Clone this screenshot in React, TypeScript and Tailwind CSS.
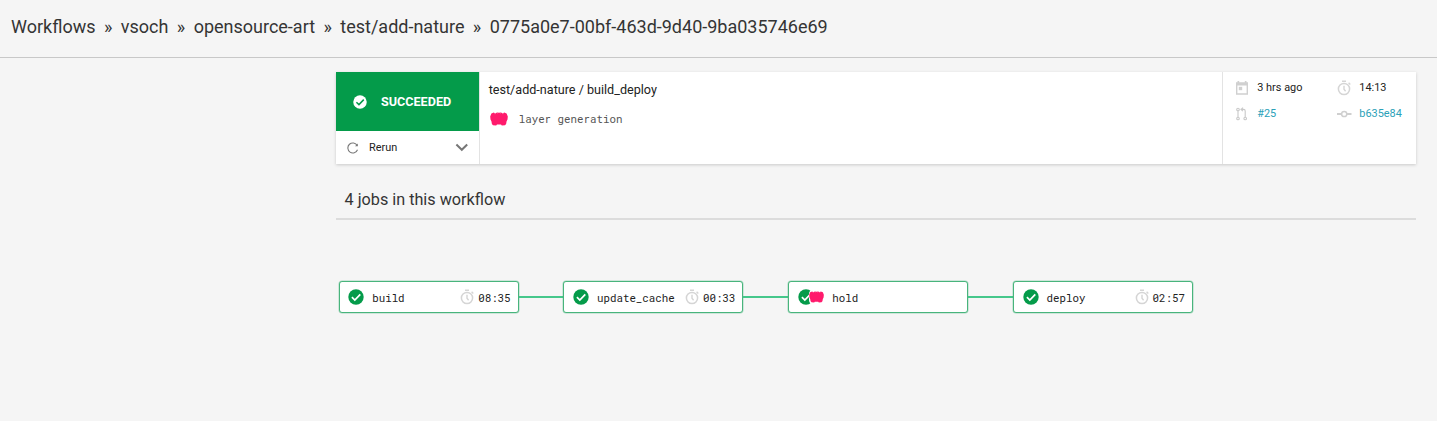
import { Fragment, type ReactNode } from "react";

const crumbs = ["Workflows", "vsoch", "opensource-art", "test/add-nature", "0775a0e7-00bf-463d-9d40-9ba035746e69"];

const jobs = [
  { name: "build", time: "08:35" },
  { name: "update_cache", time: "00:33" },
  { name: "hold", avatar: true },
  { name: "deploy", time: "02:57" },
];

function CheckIcon({ size, disc, tick }: { size: number; disc: string; tick: string }) {
  return (
    <svg width={size} height={size} viewBox="0 0 16 16" className="block shrink-0">
      <circle cx="8" cy="8" r="7.7" fill={disc} />
      <path d="M3.9 8.2 6.8 11 12.3 5.3" fill="none" stroke={tick} strokeWidth="1.7" />
    </svg>
  );
}

function Stopwatch() {
  return (
    <svg width="15" height="16" viewBox="0 0 15 16" fill="none" stroke="#d5d5d5" className="block shrink-0">
      <circle cx="7" cy="9" r="5.6" strokeWidth="1.5" />
      <path d="M5 1.3h4M7 5.8v3.4l1.6 2M11.6 2.8l1.7 1.7" strokeWidth="1.4" />
    </svg>
  );
}

function Avatar({ width, height }: { width: number; height: number }) {
  return (
    <svg width={width} height={height} viewBox="0 0 18 14" preserveAspectRatio="none" className="block shrink-0">
      <path
        d="M1.4 1.4 3.8.6 5.2 1.5 7 .5 9 .8 11 .5 12.8 1.5 14.2.6 16.6 1.4 17.8 4.4 17.5 7.6 16.6 9.2 16.1 12 15 13.2 11.8 13.5 11 12.6H7L6.2 13.5 3 13.2 1.9 12 1.4 9.2.5 7.6.2 4.4Z"
        fill="#ff1a6c"
      />
      <path d="M4.9 1v1.2M13.1 1v1.2M7.6 1.2v.7M10.4 1.2v.7" stroke="#ff86b1" strokeWidth=".5" />
    </svg>
  );
}

function Meta({ icon, link, children }: { icon: ReactNode; link?: boolean; children: ReactNode }) {
  return (
    <div className="flex h-[26px] items-center">
      <span className="flex w-[22.3px] shrink-0 items-center">{icon}</span>
      <span className={link ? "pt-[2px] text-[#2ba1b8]" : "pt-[2px] text-[#222]"}>{children}</span>
    </div>
  );
}

export default function App() {
  return (
    <div className="h-[421px] w-[1437px] overflow-hidden bg-[#f5f5f5] font-['Roboto',sans-serif] text-[#343434]">
      <header className="flex h-[58px] items-center border-b border-[#c8c8c8] pb-[5px] pl-[11px] text-[18px] whitespace-nowrap">
        {crumbs.map((crumb, i) => (
          <Fragment key={crumb}>
            {i > 0 && <span className="w-[25.25px] text-center">»</span>}
            <span>{crumb}</span>
          </Fragment>
        ))}
      </header>

      <main className="ml-[336px] w-[1080px] pt-[14px]">
        <section className="flex h-[92px] bg-white text-[10.9px] shadow-[0_1px_3px_rgba(0,0,0,0.18)]">
          <div className="flex w-[144px] flex-col border-r border-[#e3e3e3]">
            <div className="flex h-[59px] w-[143px] items-center bg-[#049b4a] pl-[17px] text-[12.6px] font-bold text-white">
              <CheckIcon size={14} disc="#fff" tick="#049b4a" />
              <span className="pt-[2px] pl-[14px]">SUCCEEDED</span>
            </div>
            <div className="flex h-[33px] items-center pl-[11px] text-[#222]">
              <svg width="12" height="12" viewBox="0 0 12 12" fill="none" stroke="#777" className="block shrink-0">
                <path d="M10.2 3.5A5 5 0 1 0 10.5 7.8" strokeWidth="1.1" />
                <path d="M10.8 1.4v2.8H8Z" fill="#777" stroke="none" />
              </svg>
              <span className="w-[96px] shrink-0 pt-px pl-[10px]">Rerun</span>
              <svg width="14" height="9" viewBox="0 0 14 9" fill="none" stroke="#777" strokeWidth="2" className="block shrink-0">
                <path d="m1.4 1.5 5.4 5.3 5.4-5.3" />
              </svg>
            </div>
          </div>
          <div className="w-[742px] pt-[9px] pl-[8.7px]">
            <div className="text-[12.6px] leading-[18px] text-[#222]">test/add-nature / build_deploy</div>
            <div className="mt-[12px] flex h-[17px] items-center pl-px">
              <span className="-mt-px">
                <Avatar width={18} height={14} />
              </span>
              <span className="pl-[11px] font-['Roboto_Mono','DejaVu_Sans_Mono',monospace] text-[10.8px] text-[#555]">layer generation</span>
            </div>
          </div>
          <div className="grid w-[194px] grid-cols-[102px_1fr] content-start border-l border-[#e3e3e3] pt-[2px] pl-[12px]">
            <Meta
              icon={
                <svg width="14" height="14" viewBox="0 0 14 14" className="mt-px block">
                  <path d="M2.5 0h1.7v1.2h5.6V0h1.7v1.2H13v12.5H1V1.2h1.5ZM2.4 4.4v7.9h9.2V4.4Z" fill="#d0d0d0" fillRule="evenodd" />
                  <path d="M3.8 5.8h3.4v3.4H3.8Z" fill="#d0d0d0" />
                </svg>
              }
            >
              3 hrs ago
            </Meta>
            <Meta icon={<span className="pt-px"><Stopwatch /></span>}>14:13</Meta>
            <Meta
              link
              icon={
                <svg width="14" height="14" viewBox="0 0 14 14" fill="none" stroke="#c9c9c9" strokeWidth="1.1" className="mt-px block">
                  <circle cx="3" cy="2.5" r="1.3" />
                  <circle cx="3" cy="11.5" r="1.3" />
                  <circle cx="10.2" cy="11.5" r="1.3" />
                  <path d="M3 3.8v6.4M5.6 2.4h3q1.6 0 1.6 1.6v6.2M8 .6 6 2.4l2 1.8" />
                </svg>
              }
            >
              #25
            </Meta>
            <Meta
              link
              icon={
                <svg width="15" height="8" viewBox="0 0 15 8" fill="none" stroke="#cfcfcf" className="mt-[2px] block">
                  <circle cx="7.2" cy="4" r="2.6" strokeWidth="1.5" />
                  <path d="M0 4h4.5M10 4h4.5" strokeWidth="2.2" />
                </svg>
              }
            >
              b635e84
            </Meta>
          </div>
        </section>

        <h2 className="mt-[18px] h-[38px] border-b-2 border-[#dcdcdc] pl-[8.6px] text-[16.2px] leading-[35px]">4 jobs in this workflow</h2>

        <div className="flex items-center pt-[61px] pl-[2.6px] font-['Roboto_Mono','DejaVu_Sans_Mono',monospace] text-[10.8px] text-[#222]">
          {jobs.map((job, i) => (
            <Fragment key={job.name}>
              {i > 0 && <div className="h-[2px] w-[44.8px] bg-[#45c78b]" />}
              <div className="flex h-[32px] w-[180px] items-center rounded-[3px] border border-[#48b47c] bg-white pr-[7px] pl-[8.6px] shadow-[0_0_0_0.5px_rgba(72,180,124,0.45)]">
                <CheckIcon size={16} disc="#049b4a" tick="#fff" />
                {job.avatar && (
                  <span className="relative -ml-[4.6px] flex h-[16px] w-[15px] items-center rounded-[5px] bg-white">
                    <Avatar width={15} height={12} />
                  </span>
                )}
                <span className="flex-1 pt-[3px] pl-[8px]">{job.name}</span>
                {job.time && (
                  <>
                    <Stopwatch />
                    <span className="pt-[3px] pl-[3px]">{job.time}</span>
                  </>
                )}
              </div>
            </Fragment>
          ))}
        </div>
      </main>
    </div>
  );
}
